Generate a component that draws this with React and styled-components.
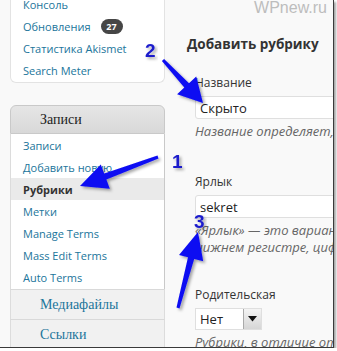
import React from "react";
import styled, { createGlobalStyle } from "styled-components";

const GlobalStyle = createGlobalStyle`
  html, body {
    margin: 0;
    padding: 0;
    background: #ffffff;
  }
  body {
    font-family: "Open Sans", "Liberation Sans", Arial, sans-serif;
  }
`;

const topMenu = [
  { label: "Консоль" },
  { label: "Обновления", badge: "27" },
  { label: "Статистика Akismet" },
  { label: "Search Meter" },
];

const postsMenu = [
  { label: "Записи" },
  { label: "Добавить новую" },
  { label: "Рубрики", current: true },
  { label: "Метки" },
  { label: "Manage Terms" },
  { label: "Mass Edit Terms" },
  { label: "Auto Terms" },
];

// arrows: start point, tip, head length, head width
const arrows = [
  { from: [163, 60], to: [203, 103], head: 24, width: 26 },
  { from: [158, 157], to: [80, 186], head: 27, width: 26 },
  { from: [178, 308], to: [198, 232], head: 27, width: 25 },
];

const numbers = [
  { n: "2", x: 145, y: 57 },
  { n: "1", x: 172, y: 168 },
  { n: "3", x: 194, y: 228 },
];

function arrowPoints({ from, to, head, width }) {
  const dx = to[0] - from[0];
  const dy = to[1] - from[1];
  const len = Math.hypot(dx, dy);
  const ux = dx / len;
  const uy = dy / len;
  const nx = -uy;
  const ny = ux;
  const bx = to[0] - ux * head;
  const by = to[1] - uy * head;
  const s0 = 1.5;
  const s1 = 3.2;
  const pts = [
    [from[0] + nx * s0, from[1] + ny * s0],
    [bx + nx * s1, by + ny * s1],
    [bx + (nx * width) / 2, by + (ny * width) / 2],
    to,
    [bx - (nx * width) / 2, by - (ny * width) / 2],
    [bx - nx * s1, by - ny * s1],
    [from[0] - nx * s0, from[1] - ny * s0],
  ];
  return pts.map((p) => p.map((v) => v.toFixed(1)).join(",")).join(" ");
}

const App = () => {
  return (
    <>
      <GlobalStyle />
      <Frame>
        <Page>
          <Sidebar>
            <TopBox>
              {topMenu.map((item) => (
                <MenuItem key={item.label}>
                  {item.label}
                  {item.badge && <Badge>{item.badge}</Badge>}
                </MenuItem>
              ))}
            </TopBox>
            <MenuGroup>
              <GroupHeader>Записи</GroupHeader>
              <SubMenu>
                {postsMenu.map((item) => (
                  <MenuItem key={item.label} $current={item.current}>
                    {item.label}
                  </MenuItem>
                ))}
              </SubMenu>
              <GroupRow>Медиафайлы</GroupRow>
              <GroupRow>Ссылки</GroupRow>
            </MenuGroup>
          </Sidebar>
          <Main>
            <Heading>Добавить рубрику</Heading>
            <Form>
              <Field>
                <Label>Название</Label>
                <TextInput>Скрыто</TextInput>
                <Hint>Название определяет, как элемент будет отображаться на вашем сайте.</Hint>
              </Field>
              <Field $gap={34}>
                <Label>Ярлык</Label>
                <TextInput>sekret</TextInput>
                <Hint>
                  «Ярлык» — это вариант названия, подходящий для URL. Обычно содержит только латинские буквы в
                  <br />
                  нижнем регистре, цифры и дефисы.
                </Hint>
              </Field>
              <Field $gap={31}>
                <Label>Родительская</Label>
                <Select>
                  <SelectValue>Нет</SelectValue>
                  <SelectButton>
                    <svg width="9" height="6" viewBox="0 0 9 6">
                      <path d="M0 0h9L4.5 5.5z" fill="#111" />
                    </svg>
                  </SelectButton>
                </Select>
                <Hint>Рубрики, в отличие от меток, могут иметь иерархию.</Hint>
              </Field>
            </Form>
          </Main>
        </Page>
        <Watermark>WPnew.ru</Watermark>
        <Overlay width="333" height="347" viewBox="0 0 333 347">
          <defs>
            <filter id="sh" x="-20%" y="-20%" width="140%" height="140%">
              <feDropShadow dx="2" dy="2" stdDeviation="1.8" floodColor="#000" floodOpacity="0.35" />
            </filter>
          </defs>
          {arrows.map((a, i) => (
            <polygon key={i} points={arrowPoints(a)} fill="#0d0df2" filter="url(#sh)" />
          ))}
          {numbers.map((n) => (
            <NumberText key={n.n} x={n.x} y={n.y} filter="url(#sh)">
              {n.n}
            </NumberText>
          ))}
        </Overlay>
      </Frame>
    </>
  );
};

export default App;

const Frame = styled.div`
  position: relative;
  width: 333px;
  height: 347px;
  overflow: hidden;
  background: #f9f9f9;
  border-right: 1px solid #3a3a3a;
  border-bottom: 1px solid #3a3a3a;
  box-shadow: 2px 2px 2px rgba(0, 0, 0, 0.35);
`;

const Page = styled.div`
  display: flex;
  height: 100%;
`;

const Sidebar = styled.div`
  width: 155px;
  margin-left: 10px;
  flex-shrink: 0;
`;

const TopBox = styled.div`
  margin-top: -7px;
  padding-bottom: 1px;
  background: #fff;
  border: 1px solid #e3e3e3;
  border-top: none;
  border-radius: 0 0 6px 6px;
`;

const MenuItem = styled.div`
  display: flex;
  align-items: center;
  height: 22px;
  padding-left: 12px;
  font-size: 11px;
  color: ${(p) => (p.$current ? "#333" : "#21759b")};
  font-weight: ${(p) => (p.$current ? 700 : 400)};
  background: ${(p) => (p.$current ? "#eaeaea" : "transparent")};
`;

const Badge = styled.span`
  display: inline-flex;
  align-items: center;
  justify-content: center;
  margin-left: 10px;
  width: 22px;
  height: 15px;
  border-radius: 8px;
  background: #464646;
  color: #fff;
  font-size: 9px;
  font-weight: 700;
`;

const MenuGroup = styled.div`
  margin-top: 22px;
`;

const GroupHeader = styled.div`
  box-sizing: border-box;
  height: 29px;
  padding-left: 29px;
  display: flex;
  align-items: center;
  font-family: "Liberation Serif", "Times New Roman", serif;
  font-size: 14px;
  color: #222;
  background: linear-gradient(#e6e6e6, #d8d8d8);
  border: 1px solid #c9c9c9;
  border-radius: 6px 6px 0 0;
`;

const SubMenu = styled.div`
  background: #fff;
  border-left: 1px solid #dcdcdc;
  border-right: 1px solid #c9c9c9;
  padding-bottom: 1px;
`;

const GroupRow = styled.div`
  box-sizing: border-box;
  height: 30px;
  padding-left: 29px;
  display: flex;
  align-items: center;
  font-family: "Liberation Serif", "Times New Roman", serif;
  font-size: 14px;
  color: #21759b;
  background: #f1f1f1;
  border-top: 1px solid #d9d9d9;
  border-left: 1px solid #dcdcdc;
  border-right: 1px solid #dcdcdc;
`;

const Main = styled.div`
  flex: 1;
  min-width: 0;
  padding-left: 22px;
`;

const Heading = styled.h2`
  margin: 35px 0 0;
  font-size: 13.5px;
  line-height: 18px;
  font-weight: 700;
  color: #333;
  white-space: nowrap;
`;

const Form = styled.div`
  padding-left: 8px;
`;

const Field = styled.div`
  margin-top: ${(p) => p.$gap ?? 22}px;
`;

const Label = styled.div`
  font-size: 12px;
  line-height: 16px;
  color: #333;
  margin-bottom: 5px;
  white-space: nowrap;
`;

const TextInput = styled.div`
  box-sizing: border-box;
  width: 200px;
  height: 23px;
  padding-left: 4px;
  display: flex;
  align-items: center;
  background: #fff;
  border: 1px solid #dfdfdf;
  border-radius: 3px;
  font-size: 13px;
  color: #222;
`;

const Hint = styled.div`
  margin-top: 4px;
  font-size: 13px;
  line-height: 17px;
  font-style: italic;
  color: #666;
  white-space: nowrap;
`;

const Select = styled.div`
  box-sizing: border-box;
  width: 67px;
  height: 22px;
  display: flex;
  background: #fff;
  border: 1px solid #dfdfdf;
`;

const SelectValue = styled.div`
  flex: 1;
  padding-left: 4px;
  display: flex;
  align-items: center;
  font-size: 13px;
  color: #222;
`;

const SelectButton = styled.div`
  width: 17px;
  display: flex;
  align-items: center;
  justify-content: center;
  background: linear-gradient(#f4f4f4, #d6d6d6);
  border-left: 1px solid #aaa;
`;

const Watermark = styled.div`
  position: absolute;
  top: -1px;
  right: 6px;
  font-family: "Liberation Sans", Arial, sans-serif;
  font-size: 16px;
  color: #bdbdbd;
`;

const Overlay = styled.svg`
  position: absolute;
  left: 0;
  top: 0;
  pointer-events: none;
`;

const NumberText = styled.text`
  font-family: "Liberation Sans", Arial, sans-serif;
  font-size: 19px;
  font-weight: 700;
  fill: #1c1ccc;
`;
